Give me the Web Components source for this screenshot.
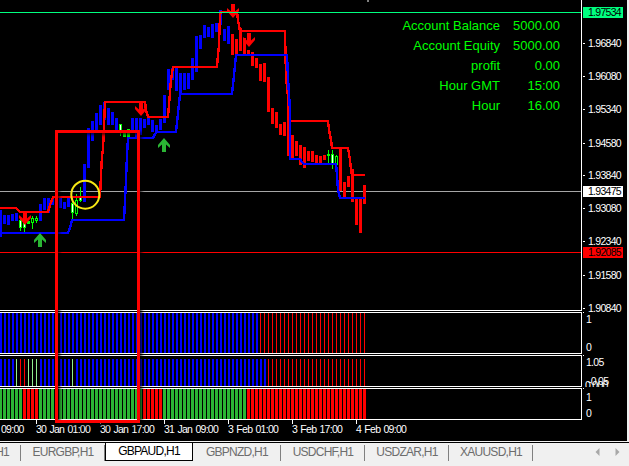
<!DOCTYPE html>
<html>
<head>
<meta charset="utf-8">
<style>
  html, body { margin: 0; padding: 0; background: #f0f0f0; width: 629px; height: 466px; overflow: hidden; font-family: "Liberation Sans", Arial, sans-serif; }
</style>
</head>
<body>
<chart-window>
  <price-pane></price-pane>
  <indicator-pane h="42" name="a"></indicator-pane>
  <indicator-pane h="32" name="b"></indicator-pane>
  <indicator-pane h="32" name="c"></indicator-pane>
  <time-axis></time-axis>
</chart-window>
<tab-strip>
  <chart-tab w="21" first>H1</chart-tab>
  <chart-tab w="84">EURGBP,H1</chart-tab>
  <chart-tab w="88" active>GBPAUD,H1</chart-tab>
  <chart-tab w="88">GBPNZD,H1</chart-tab>
  <chart-tab w="84">USDCHF,H1</chart-tab>
  <chart-tab w="84">USDZAR,H1</chart-tab>
  <chart-tab w="84">XAUUSD,H1</chart-tab>
</tab-strip>

<script>
const RED = "#ff0000", BLUE = "#0000ff", LIME = "#00ff00", ARROW_GREEN = "#2bb534";
const SMALL = `font: 10.5px "Liberation Sans", Arial, sans-serif; letter-spacing: -.72px; word-spacing: 1px;`;

// [left, top, bottom], bars are 3px wide on a 4px grid
const blueBars = [
  [-1,210,235],[3,215,224],[7,215,225],[11,214,221],[15,213,221],[39,204,221],[43,198,210],[47,198,213],[51,198,205],
  [59,198,208],[63,202,209],[67,198,207],[83,164,202],[87,128,168],[91,121,141],[95,113,130],[99,105,125],[103,102,120],
  [107,108,125],[111,112,125],[115,118,130],[131,118,132],[135,118,138],[139,118,135],[143,119,128],[147,118,125],
  [151,120,132],[155,125,133],[159,119,130],[163,95,123],[167,69,90],[171,68,80],[175,68,91],[179,73,95],[183,73,90],
  [187,73,89],[191,58,80],[195,36,72],[199,35,49],[203,25,38],[207,27,37],[211,24,38],[215,23,32],[219,10,25],
  [223,29,41],[227,26,44]
];
const redBars = [
  [231,34,55],[235,39,55],[239,28,51],[243,38,54],[247,50,54],[251,52,66],[255,58,68],[259,64,81],[263,63,82],
  [267,77,112],[271,108,124],[275,112,128],[279,124,135],[283,122,136],[287,100,156],[291,135,158],[295,141,156],
  [299,145,165],[303,147,168],[307,151,161],[311,151,162],[315,155,163],[319,156,164],[323,155,160],
  [339,149,191],[343,182,197],[347,176,187],[351,169,202],[355,197,225],[359,197,233],[363,185,204]
];
// [centre, wick top, wick bottom, body top, body bottom, core colour]
const candles = [
  [20,219,231,220,228,"#fff"],[24,215,232,223,228,"#fff"],[28,221,224,221,224,LIME],[32,216,229,218,223,"#000"],
  [36,216,223,218,221,"#000"],[72,197,220,203,213,"#fff"],[76,194,216,200,214,"#000"],[80,187,202,197,201,"#fff"],
  [120,124,136,124,131,"#fff"],[124,133,137,133,137,LIME],[128,129,139,129,139,LIME],
  [328,150,165,154,156,"#000"],[332,150,169,154,165,"#fff"],[336,155,167,156,165,"#000"]
];
const redLine = [[0,208],[16,208],[20,212],[48,212],[50,205],[53,197],[100,197],[101,175],[102,155],[103,150],[104,126],[105,102],
  [145,102],[146,110],[148,117],[168,117],[169,105],[170,92],[171,80],[173,67],[217,67],[218,55],[219,45],[220,14],[221,12],
  [237,12],[238,20],[240,31],[285,31],[286,77],[288,97],[290,121],[328,121],[329,130],[331,140],[332,148],[348,148],[350,160],
  [351,170],[352,175],[365,175]];
const blueLine = [[1,237],[1,233],[68,233],[70,228],[71,224],[72,220],[124,220],[125,200],[126,180],[127,155],[128,138],[153,138],
  [155,134],[157,132],[176,132],[177,123],[178,113],[179,104],[180,94],[232,94],[233,85],[234,75],[235,65],[236,55],[287,55],
  [288,78],[290,110],[290,159],[300,159],[302,162],[304,164],[336,164],[337,175],[338,190],[340,198],[365,198]];

const pts = list => list.map(p => p.join(",")).join(" ");
const barRects = (list, color) => list.map(b => `<rect x="${b[0]}" y="${b[1]}" width="3" height="${b[2]-b[1]}" fill="${color}"/>`).join("");

function arrow(cx, top, up, color) {
  const shape = "6,0 12,7 12,10 8,6.5 8,14 4,14 4,6.5 0,10 0,7";
  const t = up ? `translate(${cx-6} ${top})` : `translate(${cx+6} ${top+14}) rotate(180)`;
  return `<polygon transform="${t}" points="${shape}" fill="${color}"/>`;
}

class ChartWindow extends HTMLElement {
  constructor() {
    super();
    this.attachShadow({mode: "open"});
  }
  connectedCallback() {
    this.shadowRoot.innerHTML = `
      <style>
        :host { display: flex; flex-direction: column; position: relative; width: 627px; height: 441px; background: #000; overflow: hidden; }
        .zone { position: absolute; left: 55px; top: 130px; width: 85px; height: 293px; box-sizing: border-box; border: 3px solid ${RED};
                box-shadow: 2px 2px 3px rgba(0,0,0,.7), inset 2px 2px 3px rgba(0,0,0,.7); }
      </style>
      <slot></slot>
      <div class="zone"></div>`;
  }
}

class PricePane extends HTMLElement {
  constructor() {
    super();
    this.attachShadow({mode: "open"});
  }
  connectedCallback() {
    const ticks = [["1.96840",43],["1.96080",76],["1.95340",109],["1.94580",143],["1.93840",175],["1.93080",208],["1.92340",241],["1.91580",275],["1.90840",308]];
    const info = [["Account Balance","5000.00"],["Account Equity","5000.00"],["profit","0.00"],["Hour GMT","15:00"],["Hour","16.00"]];
    this.shadowRoot.innerHTML = `
      <style>
        :host { display: flex; height: 311px; flex: none; color: #fff; }
        .plot { position: relative; width: 581px; height: 310px; border-right: 1px solid #fff; border-bottom: 1px solid #fff; overflow: hidden; }
        svg { display: block; }
        .info { position: absolute; top: 15px; left: 381px; display: grid; grid-template-columns: 119px 60px; grid-auto-rows: 20px; align-items: center;
                text-align: right; font: 13px "Liberation Sans", Arial, sans-serif; color: ${LIME}; }
        .axis { position: relative; flex: 1; ${SMALL} }
        .tick { position: absolute; left: 1px; width: 2px; height: 1px; background: #fff; }
        .lbl { position: absolute; left: 6px; line-height: 12px; margin-top: -6px; }
        .box { position: absolute; left: 1px; width: 35px; height: 11px; line-height: 11px; padding-left: 5px; color: #000; }
      </style>
      <div class="plot">
        <svg width="581" height="310" shape-rendering="crispEdges">
          <line x1="0" x2="581" y1="191.5" y2="191.5" stroke="#a6a6a6"/>
          <line x1="0" x2="581" y1="252.5" y2="252.5" stroke="${RED}"/>
          ${barRects(blueBars, BLUE)}
          ${barRects(redBars, RED)}
          ${candles.map(c => `<rect x="${c[0]}" y="${c[1]}" width="1" height="${c[2]-c[1]}" fill="${LIME}"/>
            <rect x="${c[0]-1}" y="${c[3]}" width="3" height="${c[4]-c[3]}" fill="${LIME}"/>
            <rect x="${c[0]}" y="${c[3]+1}" width="1" height="${Math.max(c[4]-c[3]-2,0)}" fill="${c[5]}"/>`).join("")}
          <polyline points="${pts(redLine)}" fill="none" stroke="${RED}" stroke-width="2.4"/>
          <polyline points="${pts(blueLine)}" fill="none" stroke="${BLUE}" stroke-width="2.4"/>
          <rect x="367" y="0" width="2" height="2" fill="#808080"/>
          <g shape-rendering="auto">
            ${arrow(25,211,false,RED)}${arrow(141,102,false,RED)}${arrow(233,4,false,RED)}${arrow(249,33,false,RED)}
            ${arrow(40,233,true,ARROW_GREEN)}${arrow(164,138,true,ARROW_GREEN)}
            <circle cx="85.3" cy="194.7" r="14" fill="none" stroke="#f7e814" stroke-width="2"/>
          </g>
          <line x1="0" x2="581" y1="12.5" y2="12.5" stroke="#00ff7f"/>
        </svg>
        <div class="info">
          ${info.map(r => `<span>${r[0]}</span><span>${r[1]}</span>`).join("")}
        </div>
      </div>
      <div class="axis">
        ${ticks.map(t => `<i class="tick" style="top:${t[1]}px"></i><span class="lbl" style="top:${t[1]}px">${t[0]}</span>`).join("")}
        <span class="box" style="top:7px;background:#00ff7f">1.97534</span>
        <span class="box" style="top:186px;background:#fff">1.93475</span>
        <span class="box" style="top:247px;background:${RED}">1.92085</span>
      </div>`;
  }
}

const paneData = {
  a: { labels: [["1",7],["0",35]],
    rows(x) { return x <= 256 ? [BLUE, 2] : [RED, 1]; }, top: 0, extra: {} },
  b: { labels: [["1.05",7],["-0.05",26,3],["0.000",30,0]],
    rows(x) { return x <= 264 ? [BLUE, 2] : [RED, 1]; }, top: 3,
    extra: {16:"#90ee90",20:RED,24:RED,28:"#90ee90",32:"#90ee90",36:"#90ee90",72:"#90ee90"} },
  c: { labels: [["1",9],["0",25]], bars: true,
    reds: [[23,38],[143,162],[247,366]], top: 0 }
};

class IndicatorPane extends HTMLElement {
  constructor() {
    super();
    this.attachShadow({mode: "open"});
  }
  connectedCallback() {
    const h = +this.getAttribute("h");
    const d = paneData[this.getAttribute("name")];
    const inner = h - 2;
    let s = "";
    if (d.bars) {
      for (let x = -1; x < 364; x += 4) {
        const isRed = d.reds.some(r => x >= r[0] - 1 && x < r[1]);
        s += `<rect x="${x}" y="0" width="3" height="${inner}" fill="${isRed ? RED : ARROW_GREEN}"/>`;
      }
    } else {
      for (let x = 0; x <= 364; x += 4) {
        const r = d.rows(x);
        if (d.extra[x]) s += `<rect x="${x}" y="${d.top}" width="1" height="${inner-d.top}" fill="${d.extra[x]}"/>`;
        else s += `<rect x="${x}" y="${d.top}" width="${r[1]}" height="${inner-d.top}" fill="${r[0]}"/>`;
      }
    }
    this.shadowRoot.innerHTML = `
      <style>
        :host { display: flex; flex: none; height: ${h}px; margin-top: 1px; color: #fff; }
        .plot { box-sizing: border-box; height: 100%; border: solid #fff; border-width: 1px 1px 1px 0; width: 582px; }
        svg { display: block; }
        .axis { position: relative; flex: 1; overflow: hidden; ${SMALL} }
        .tick { position: absolute; left: 1px; top: 0; width: 1px; height: 1px; background: #fff; }
        .lbl { position: absolute; line-height: 12px; margin-top: -6px; }
      </style>
      <div class="plot"><svg width="581" height="${inner}" shape-rendering="crispEdges">${s}</svg></div>
      <div class="axis">
        <i class="tick"></i>
        ${d.labels.map(l => `<span class="lbl" style="top:${l[1]}px;left:${l[2] === undefined ? 4 : l[2] + 3}px">${l[0]}</span>`).join("")}
      </div>`;
  }
}

class TimeAxis extends HTMLElement {
  constructor() {
    super();
    this.attachShadow({mode: "open"});
  }
  connectedCallback() {
    const labels = [["09:00",1,1],["30 Jan 01:00",36],["30 Jan 17:00",100],["31 Jan 09:00",164],["3 Feb 01:00",228],["3 Feb 17:00",292],["4 Feb 09:00",356]];
    this.shadowRoot.innerHTML = `
      <style>
        :host { display: block; flex: 1; position: relative; overflow: hidden; color: #fff; ${SMALL} }
        i { position: absolute; top: 0; width: 1px; height: 4px; background: #fff; }
        span { position: absolute; top: 3px; line-height: 12px; white-space: nowrap; }
      </style>
      ${labels.map(l => `${l[2] ? "" : `<i style="left:${l[1]}px"></i>`}<span style="left:${l[1]}px">${l[0]}</span>`).join("")}`;
  }
}

class TabStrip extends HTMLElement {
  constructor() {
    super();
    this.attachShadow({mode: "open"});
  }
  connectedCallback() {
    this.shadowRoot.innerHTML = `
      <style>
        :host { display: flex; align-items: flex-start; height: 25px; box-sizing: border-box; background: #f0f0f0; border-top: 1px solid #000; margin-top: 1px; }
        .scroll { margin-left: auto; display: flex; gap: 13px; padding: 5px 9px 0 0; }
        svg { display: block; }
      </style>
      <slot></slot>
      <div class="scroll">
        <svg width="6" height="8"><polygon points="4.5,0 .5,4 4.5,8" fill="#a8a8a8"/></svg>
        <svg width="6" height="8"><polygon points="1.5,0 5.5,4 1.5,8" fill="#a8a8a8"/></svg>
      </div>`;
  }
}

class ChartTab extends HTMLElement {
  constructor() {
    super();
    this.attachShadow({mode: "open"});
  }
  connectedCallback() {
    const w = this.getAttribute("w");
    const first = this.hasAttribute("first");
    this.shadowRoot.innerHTML = `
      <style>
        :host { display: flex; flex: none; width: ${w}px; height: 18px; box-sizing: border-box; align-items: center; white-space: nowrap; padding-bottom: 1px;
                justify-content: ${first ? "flex-end" : "center"}; padding-right: ${first ? 12 : 0}px;
                color: #6d6d6d; font: 12px "Liberation Sans", Arial, sans-serif; letter-spacing: -.75px; position: relative; }
        :host([active]) { background: #fff; color: #000; border: 1px solid #000; border-top: 0; }
        .sep { position: absolute; right: 0; top: 2px; bottom: 0; width: 1px; background: #808080; }
        :host([active]) .sep { display: none; }
      </style>
      <slot></slot><i class="sep"></i>`;
  }
}

customElements.define("chart-window", ChartWindow);
customElements.define("price-pane", PricePane);
customElements.define("indicator-pane", IndicatorPane);
customElements.define("time-axis", TimeAxis);
customElements.define("tab-strip", TabStrip);
customElements.define("chart-tab", ChartTab);
</script>
</body>
</html>
